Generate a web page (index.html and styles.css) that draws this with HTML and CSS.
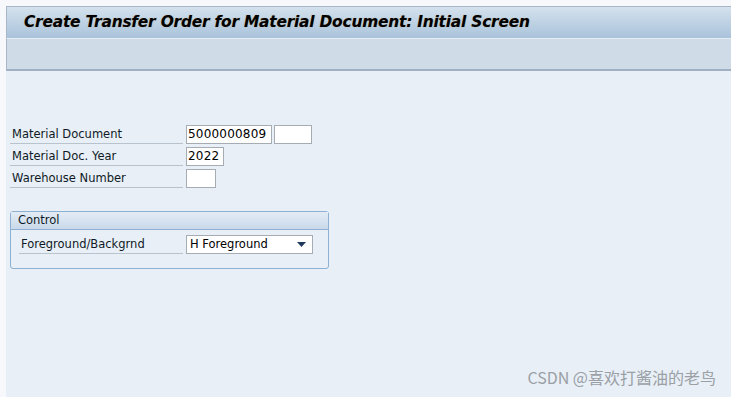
FILE: index.html
```html
<!DOCTYPE html>
<html>
<head>
    <title>Create Transfer Order for Material Document</title>
    <link rel="stylesheet" href="styles.css">
</head>
<body>
    <div class="screen">
        <div class="title-bar">
            <h1>Create Transfer Order for Material Document: Initial Screen</h1>
        </div>
        <div class="toolbar"></div>

        <div class="content">
            <div class="fields">
                <div class="row">
                    <span class="label">Material Document</span>
                    <span class="field w-doc">5000000809</span>
                    <span class="field w-item"></span>
                </div>
                <div class="row">
                    <span class="label">Material Doc. Year</span>
                    <span class="field w-year">2022</span>
                </div>
                <div class="row">
                    <span class="label">Warehouse Number</span>
                    <span class="field w-wh"></span>
                </div>
            </div>

            <div class="group">
                <div class="group-head">Control</div>
                <div class="group-body">
                    <div class="row">
                        <span class="label">Foreground/Backgrnd</span>
                        <span class="select">H Foreground
                            <svg width="9" height="5" viewBox="0 0 9 5"><path d="M0 0h9L4.5 5z" fill="#1f3a5c"/></svg>
                        </span>
                    </div>
                </div>
            </div>

            <div class="watermark">CSDN @喜欢打酱油的老鸟</div>
        </div>
    </div>
</body>
</html>
```

FILE: styles.css
```css
* {
    margin: 0;
    padding: 0;
    box-sizing: border-box;
}

body {
    width: 731px;
    height: 397px;
    overflow: hidden;
    background: #f6f8fb;
    font-family: Tahoma, "DejaVu Sans", "Liberation Sans", sans-serif;
    font-size: 12px;
    color: #000;
}

div.screen {
    margin-left: 6px;
    padding-top: 6px;
    height: 100%;
    display: flex;
    flex-direction: column;
}

div.title-bar {
    height: 32px;
    border-top: 1px solid #a9b6c6;
    border-left: 1px solid #a9b6c6;
    background: linear-gradient(#d4e1ed, #a9c3db);
    display: flex;
    align-items: center;
    padding-left: 17px;
    padding-bottom: 2px;
}

div.title-bar h1 {
    font-family: "DejaVu Sans", "Liberation Sans", sans-serif;
    font-size: 15.4px;
    font-weight: bold;
    font-style: italic;
    letter-spacing: -0.2px;
    color: #000;
    text-shadow: 0 0 1px rgba(160, 110, 30, 0.5);
}

div.toolbar {
    height: 33px;
    border-top: 1px solid #e6eef5;
    border-left: 1px solid #a9b6c6;
    border-bottom: 2px solid #9fb0c4;
    background: #cfdce7;
}

div.content {
    flex: 1;
    background: #e8eff6;
    padding: 52px 0 0 4px;
    position: relative;
}

div.row {
    display: flex;
    align-items: center;
    height: 22px;
}

span.label {
    width: 173px;
    height: 20px;
    line-height: 20px;
    padding-left: 2px;
    margin-right: 3px;
    border-bottom: 1px solid #b9c3cd;
    font-family: "DejaVu Sans", sans-serif;
    font-size: 11.5px;
    color: #0f1a26;
}

span.field {
    height: 19px;
    line-height: 17px;
    border: 1px solid #a5acb3;
    background: #fff;
    padding-left: 1px;
    margin-right: 2px;
    font-family: "DejaVu Sans", sans-serif;
    font-size: 12px;
    letter-spacing: 0.2px;
}

span.w-doc { width: 86px; }
span.w-item { width: 38px; }
span.w-year { width: 38px; }
span.w-wh { width: 30px; }

div.group {
    width: 319px;
    margin-top: 22px;
    border: 1px solid #8eb0d3;
    border-radius: 3px;
}

div.group-head {
    height: 18px;
    line-height: 16px;
    padding-left: 7px;
    border-bottom: 1px solid #8eb0d3;
    background: linear-gradient(#e3ecf5, #c9d9ea);
    font-family: "DejaVu Sans", sans-serif;
    font-size: 11.5px;
    color: #0f1a26;
}

div.group-body {
    padding: 3px 0 13px 8px;
}

div.group-body span.label {
    width: 164px;
}

span.select {
    width: 127px;
    height: 19px;
    display: flex;
    align-items: center;
    justify-content: space-between;
    padding: 0 6px 0 3px;
    border: 1px solid #a5acb3;
    background: #fff;
    font-family: "DejaVu Sans", sans-serif;
    font-size: 11.5px;
}

div.watermark {
    position: absolute;
    right: 15px;
    bottom: 8px;
    font-family: "Noto Sans CJK SC", sans-serif;
    font-size: 16px;
    color: #9aa0a6;
}
```
